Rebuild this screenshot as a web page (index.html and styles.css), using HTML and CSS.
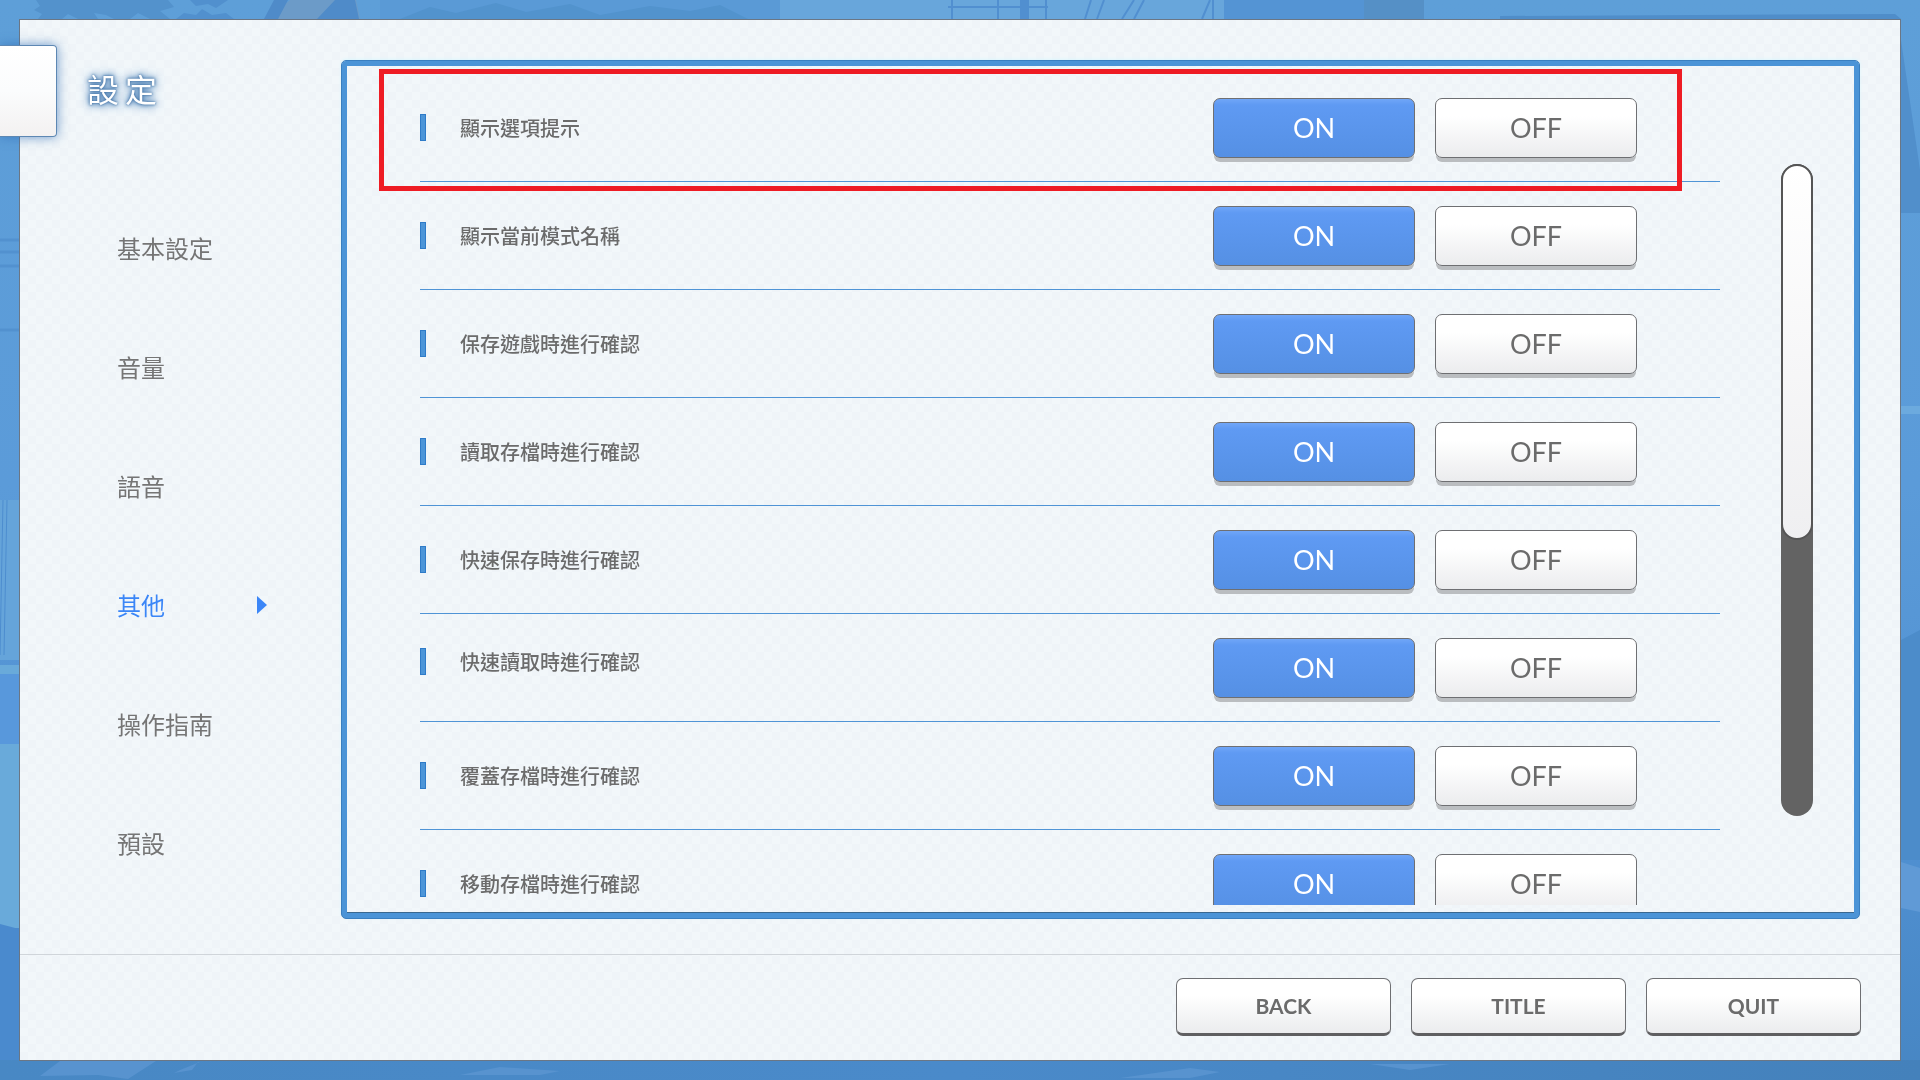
FILE: index.html
```html
<!DOCTYPE html>
<html lang="zh-Hant">
<head>
<meta charset="utf-8">
<title>設定</title>
<link rel="stylesheet" href="styles.css">
</head>
<body>
<svg class="scene" viewBox="0 0 1920 1080" preserveAspectRatio="none" aria-hidden="true">
  <defs>
    <linearGradient id="sky" x1="0" y1="0" x2="0" y2="1">
      <stop offset="0" stop-color="#5e9fd8"/>
      <stop offset="0.45" stop-color="#5b9bd9"/>
      <stop offset="0.8" stop-color="#4f8fd0"/>
      <stop offset="1" stop-color="#4786c3"/>
    </linearGradient>
    <linearGradient id="road" x1="0" y1="0" x2="1" y2="0">
      <stop offset="0" stop-color="#4888c4"/>
      <stop offset="0.5" stop-color="#4a8aca"/>
      <stop offset="1" stop-color="#4481bb"/>
    </linearGradient>
  </defs>
  <rect width="1920" height="1080" fill="url(#sky)"/>
  <path d="M36 0l4 6-6 4 8 4-4 5h24l6-5 10 5h20l-4-6 12 2 8 4h16l8-6 12 6h20l-10-8 14-4-6-7z" fill="#5392cc"/>
  <path d="M176 19l8-6 12 2 6-6 10 6 14-2 8 6zM190 0l6 6 12-2 8 4 12-8z" fill="#5190ce"/>
  <path d="M290 0l-24 19h94L356 0z" fill="#6c9bc8"/>
  <path d="M274 0h14l-10 19h-14zM335 0h20l4 19h-42z" fill="#4f8bc9"/>
  <path d="M380 0h400v19H380z" fill="#5a9ad6"/>
  <path d="M400 19l30-12 26 6 40-10 30 9 44-8 30 11 50-9 40 5 30-6 30 15z" fill="#5293cd"/>
  <path d="M780 0h448v19H780z" fill="#68a6db"/>
  <path d="M948 7h100M952 0v19M998 0v19M1046 0v19M1091 0l-6 19M1104 0l-7 19M1134 0l-12 19M1144 0l-10 19M1210 0l-8 19M1213 0v19" fill="none" stroke="#518fd0" stroke-width="2"/>
  <path d="M1020 0h9v19h-9z" fill="#518fd0"/>
  <path d="M1224 0h140v19h-140z" fill="#5494d4"/>
  <path d="M1364 0h60v19h-60z" fill="#5590c6"/>
  <path d="M1500 16l395-2 6 5h-401z" fill="#4f8dc9"/>
  <path d="M1901 40l19 130v43h-19z" fill="#518fcb"/>
  <path d="M1901 406h19v8h-19z" fill="#6caade"/>
  <path d="M1901 640l19-10v230h-19z" fill="#4c8cca"/>
  <path d="M1901 862l19 6v44l-19-4z" fill="#609ad6"/>
  <path d="M0 240h19M0 252h19M0 266h19M0 330h19" stroke="#5291cf" stroke-width="3"/>
  <path d="M0 500h19v160H0z" fill="#65a4da"/>
  <path d="M3 500l-3 155M7 500l-3 155" stroke="#4d8dcf" stroke-width="1"/>
  <path d="M0 665h19v9H0z" fill="#69aada"/>
  <path d="M0 674h19v70H0z" fill="#5898dc"/>
  <path d="M0 744h19v184H0z" fill="#69aada"/>
  <path d="M0 924l19 5v151H0z" fill="#4a8ace"/>
  <rect y="1060" width="1920" height="20" fill="url(#road)"/>
  <path d="M60 1061h96l-28 18-30-4-58 1zM180 1070l20-8h-2l-6 8-18 3zM460 1075l40-8 60 4-20 4zM1370 1064l40 6 40-6zM1120 1078l70-10 30 4-30 6z" fill="#5893cf"/>
</svg>

<main class="window">
  <header class="heading">
    <span class="tab"></span>
    <h1 class="title">設定</h1>
  </header>

  <div class="content">
    <nav class="menu">
      <a class="menu-item" href="#basic">基本設定</a>
      <a class="menu-item" href="#volume">音量</a>
      <a class="menu-item" href="#voice">語音</a>
      <a class="menu-item active" href="#other" aria-current="page">其他</a>
      <a class="menu-item" href="#controls">操作指南</a>
      <a class="menu-item" href="#preset">預設</a>
    </nav>

    <section class="panel">
      <div class="list">
        <div class="row marked"><h2 class="label">顯示選項提示</h2><button class="toggle on">ON</button><button class="toggle">OFF</button></div>
        <div class="row"><h2 class="label">顯示當前模式名稱</h2><button class="toggle on">ON</button><button class="toggle">OFF</button></div>
        <div class="row"><h2 class="label">保存遊戲時進行確認</h2><button class="toggle on">ON</button><button class="toggle">OFF</button></div>
        <div class="row"><h2 class="label">讀取存檔時進行確認</h2><button class="toggle on">ON</button><button class="toggle">OFF</button></div>
        <div class="row"><h2 class="label">快速保存時進行確認</h2><button class="toggle on">ON</button><button class="toggle">OFF</button></div>
        <div class="row raised"><h2 class="label">快速讀取時進行確認</h2><button class="toggle on">ON</button><button class="toggle">OFF</button></div>
        <div class="row"><h2 class="label">覆蓋存檔時進行確認</h2><button class="toggle on">ON</button><button class="toggle">OFF</button></div>
        <div class="row"><h2 class="label">移動存檔時進行確認</h2><button class="toggle on">ON</button><button class="toggle">OFF</button></div>
      </div>
      <div class="scrollbar"><div class="thumb"></div></div>
    </section>
  </div>

  <footer class="actions">
    <button class="action">BACK</button>
    <button class="action">TITLE</button>
    <button class="action">QUIT</button>
  </footer>
</main>
</body>
</html>
```

FILE: styles.css
```css
*,
*::before,
*::after {
  box-sizing: border-box;
}

body {
  margin: 0;
  height: 100vh;
  padding: 19px;
  display: flex;
  overflow: hidden;
  background: #5b9bd9;
  color: #6b6b6b;
  font-family: "Noto Sans CJK TC", sans-serif;
}

.scene {
  position: fixed;
  inset: 0;
  z-index: -1;
  width: 100%;
  height: 100%;
}

.window {
  flex: 1;
  min-width: 0;
  display: flex;
  flex-direction: column;
  position: relative;
  border: 1px solid #6b7684;
  background: conic-gradient(#eff4f8 25%, #f2f7fa 0 50%, #eff4f8 0 75%, #f2f7fa 0) 0 0 / 16px 16px;
}

.heading {
  position: absolute;
  top: 25px;
  left: -20px;
  display: flex;
  align-items: center;
  gap: 30px;
}

.tab {
  width: 57px;
  height: 92px;
  border: 1px solid #5d87b3;
  border-left: 0;
  border-radius: 0 4px 4px 0;
  background: linear-gradient(#ffffff, #fbfcfd 50%, #f3f1f1);
  box-shadow: 0 0 12px rgba(50, 110, 180, 0.7);
}

.title {
  margin: 0;
  padding-bottom: 6px;
  font-size: 32px;
  line-height: 48px;
  font-weight: 400;
  letter-spacing: 6px;
  color: #ffffff;
  text-shadow: 0 0 2px #34679c, 0 0 4px #3f74ab, 0 0 8px #4a80b8, 0 0 12px #7fa9d3;
}

.content {
  flex: 1;
  min-height: 0;
  display: flex;
  padding: 40px 40px 35px 0;
}

.menu {
  width: 321px;
  flex: none;
  display: flex;
  flex-direction: column;
  padding: 128px 74px 0 97px;
}

.menu-item {
  display: flex;
  align-items: center;
  justify-content: space-between;
  flex: 0 0 119px;
  font-size: 24px;
  color: #757575;
  text-decoration: none;
}

.menu-item.active {
  color: #3b86f7;
}

.menu-item.active::after {
  content: "";
  border-left: 10px solid #3b86f7;
  border-top: 9px solid transparent;
  border-bottom: 9px solid transparent;
}

.panel {
  flex: 1;
  min-width: 0;
  display: flex;
  justify-content: space-between;
  padding: 5px 46px 13px 78px;
  border: 1px solid #3a7fc0;
  border-radius: 5px;
  box-shadow: inset 0 0 0 5px #4b94d7, inset 0 -6px #3a688f, 0 -1px 3px #dcf6fd;
}

.list {
  flex: 1;
  min-width: 0;
  max-width: 1300px;
  padding-top: 8px;
  overflow-x: visible;
  overflow-y: clip;
}

.row {
  position: relative;
  height: 108px;
  display: flex;
  align-items: center;
  gap: 20px;
  padding-right: 83px;
  border-bottom: 1px solid #4f94d6;
}

.marked::before {
  content: "";
  position: absolute;
  inset: -5px 38px -10px -41px;
  border: 5px solid #ee1c24;
  z-index: 1;
}

.label {
  flex: 1;
  display: flex;
  align-items: center;
  gap: 34px;
  margin: 0;
  font-size: 20px;
  line-height: 28px;
  font-weight: 500;
}

.label::before {
  content: "";
  width: 6px;
  height: 27px;
  border: 1px solid #2e7bc8;
  background: #4c95d8;
}

.raised .label {
  padding-bottom: 12px;
}

button {
  padding: 0;
  font-family: Lato, "Noto Sans CJK TC", sans-serif;
  color: #6b6b6b;
  border: 1px solid #6e6f72;
  border-radius: 7px;
  background: linear-gradient(#ffffff 30%, #ebecee);
}

.toggle {
  width: 202px;
  height: 60px;
  font-size: 27px;
  line-height: 32px;
  font-weight: 400;
  box-shadow: 0 5px 0 -1px #babdc0;
}

.toggle.on {
  color: #ffffff;
  background: linear-gradient(#70a6f8, #5f9af3 6px, #5590e4);
}

.scrollbar {
  flex: none;
  width: 32px;
  height: 652px;
  margin-top: 98px;
  border-radius: 16px;
  background: #636363;
}

.thumb {
  height: 376px;
  border: 2px solid #555555;
  border-radius: 16px;
  background: linear-gradient(#ffffff, #efeff1);
}

.actions {
  flex: none;
  display: flex;
  justify-content: flex-end;
  gap: 20px;
  padding: 23px 39px 24px;
  border-top: 1px solid #d0d5da;
}

.action {
  width: 215px;
  height: 58px;
  font-size: 21px;
  line-height: 24px;
  font-weight: 700;
  border-bottom: 3px solid #5f5f61;
}
```
